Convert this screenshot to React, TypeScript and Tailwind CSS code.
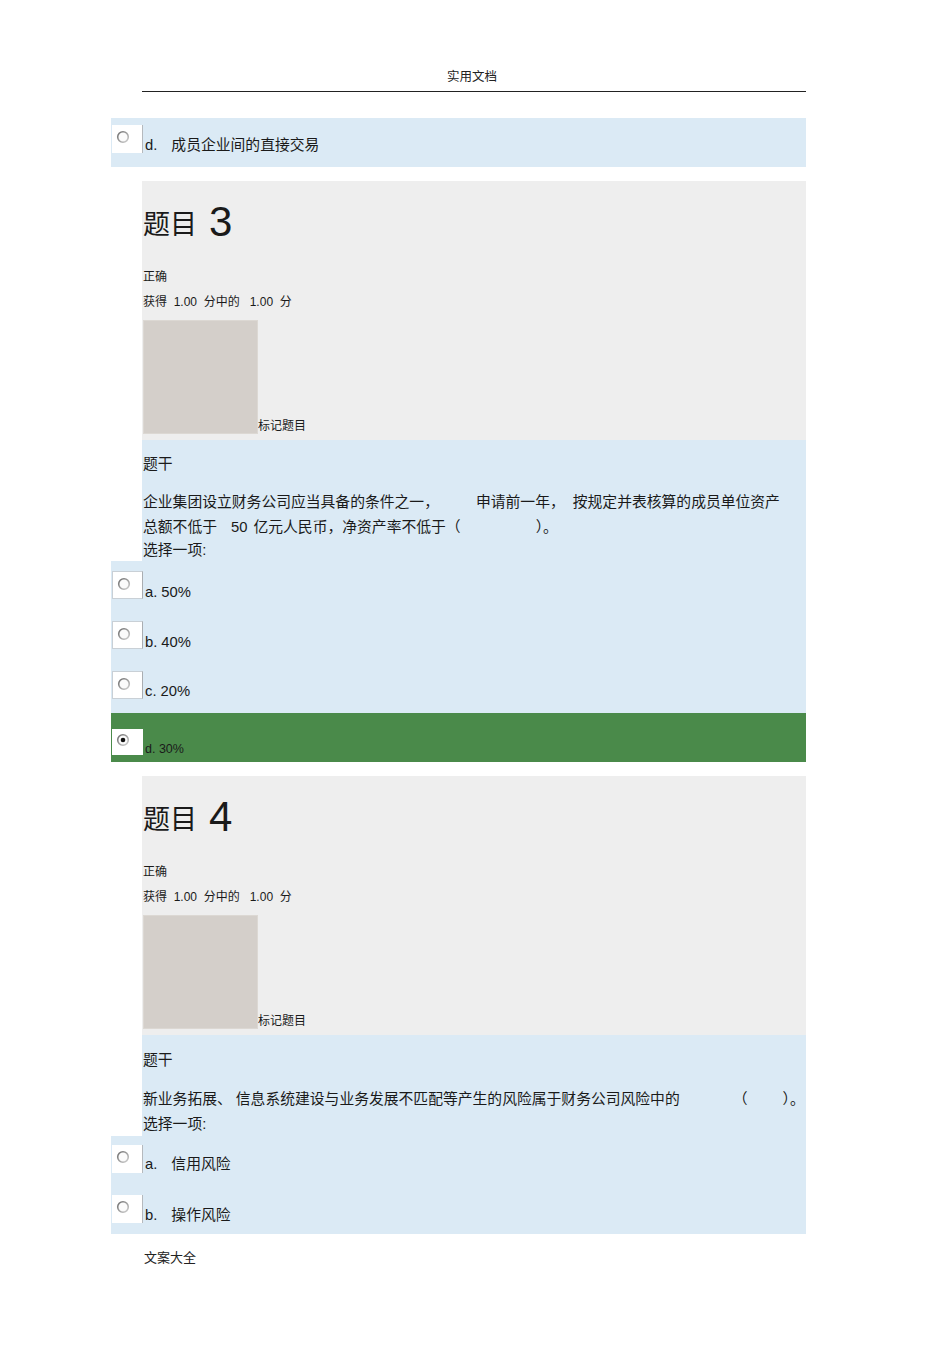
import React from 'react';

const font = { fontFamily: '"Liberation Sans", "Noto Sans CJK SC", sans-serif' };

function Radio({ checked = false }: { checked?: boolean }) {
  return (
    <svg width="14" height="14" viewBox="0 0 14 14" className="block">
      <defs>
        <linearGradient id={checked ? 'rg1' : 'rg0'} x1="0" y1="0" x2="1" y2="1">
          <stop offset="0" stopColor="#6b6b6b" />
          <stop offset="1" stopColor="#d0d0d0" />
        </linearGradient>
      </defs>
      <circle cx="7" cy="7" r="5.3" fill="#fbfbfb" stroke={`url(#${checked ? 'rg1' : 'rg0'})`} strokeWidth="1.6" />
      {checked && <circle cx="7" cy="7" r="2.3" fill="#111" />}
    </svg>
  );
}

function RadioBox({ bordered = false }: { bordered?: boolean }) {
  return (
    <div
      className={`w-[31px] h-[28px] shrink-0 bg-white pl-[4px] pt-[5px] ${bordered ? 'border border-[#c9d0d6] border-r-[#a9adb1]' : 'border-r border-[#b5b9bd]'}`}
    >
      <Radio />
    </div>
  );
}

function Option({
  label,
  text,
  rowH,
  boxTop,
  textTop,
  bordered,
  cjk,
}: {
  label: string;
  text: string;
  rowH: string;
  boxTop: string;
  textTop: string;
  bordered?: boolean;
  cjk?: boolean;
}) {
  return (
    <div className={`flex bg-[#dbeaf5] pl-[1px] ${rowH}`}>
      <div className={boxTop}>
        <RadioBox bordered={bordered} />
      </div>
      <div className={`${textTop} pl-[2px] text-[14.8px] leading-[18px] text-[#1a1a1a] whitespace-pre`}>
        {label}
        <span className={cjk ? 'ml-[14px]' : 'ml-[4px]'}>{text}</span>
      </div>
    </div>
  );
}

function QuestionHead({ num }: { num: number }) {
  return (
    <div className="ml-[31px] w-[664px] h-[259px] bg-[#eeeeee] pl-[1px] pt-[21px] text-[#1a1a1a]">
      <div className="h-[40px] flex items-end">
        <span className="text-[27px] leading-[34px]">题目</span>
        <span className="ml-[12px] text-[42px] leading-[40px]">{num}</span>
      </div>
      <div className="mt-[27px] text-[12px] leading-[16px]">正确</div>
      <div className="mt-[9px] text-[12px] leading-[16px] whitespace-pre">获得  1.00  分中的   1.00  分</div>
      <div className="mt-[10px] flex items-end">
        <div className="w-[115px] h-[114px] bg-[#d4cfca] border border-[#dcd8d3]" />
        <span className="text-[12px] leading-[15px]">标记题目</span>
      </div>
    </div>
  );
}

export default function App() {
  return (
    <div className="w-[950px] h-[1345px] bg-white" style={font}>
      <div className="pt-[69px] text-center text-[12.5px] leading-[16px] text-[#222] pr-[6px]">实用文档</div>
      <div className="ml-[142px] w-[664px] mt-[6px] border-b border-[#222]" />

      <div className="ml-[111px] w-[695px]">
        {/* trailing option of previous question */}
        <div className="mt-[26px]">
          <Option label="d." text="成员企业间的直接交易" rowH="h-[49px]" boxTop="pt-[7px]" textTop="pt-[18px]" cjk />
        </div>

        {/* question 3 */}
        <div className="mt-[14px]">
          <QuestionHead num={3} />
          <div className="ml-[31px] w-[664px] bg-[#dbeaf5] pl-[1px] pt-[14px] text-[14.8px] text-[#1a1a1a]">
            <div className="leading-[20px]">题干</div>
            <div className="mt-[16px] leading-[25px]">
              <div className="whitespace-nowrap">
                企业集团设立财务公司应当具备的条件之一，<span className="ml-[37px]">申请前一年，</span>
                <span className="ml-[8px]">按规定并表核算的成员单位资产</span>
              </div>
              <div className="whitespace-nowrap">
                总额不低于<span className="ml-[14px]">50</span>
                <span className="ml-[6px]">亿元人民币，净资产率不低于（</span>
                <span className="ml-[75px]">）。</span>
              </div>
            </div>
            <div className="leading-[21px]">选择一项:</div>
          </div>
          <div>
            <Option label="a." text="50%" rowH="h-[50px]" boxTop="pt-[10px]" textTop="pt-[22px]" bordered />
            <Option label="b." text="40%" rowH="h-[50px]" boxTop="pt-[10px]" textTop="pt-[22px]" bordered />
            <Option label="c." text="20%" rowH="h-[52px]" boxTop="pt-[10px]" textTop="pt-[21px]" bordered />
          </div>
          <div className="flex h-[49px] bg-[#4a8a4a] pl-[1px]">
            <div className="pt-[16px]">
              <div className="w-[31px] h-[26px] bg-white pl-[4px] pt-[4px]">
                <Radio checked />
              </div>
            </div>
            <div className="pt-[28px] pl-[2px] text-[12.5px] leading-[16px] text-[#1a1a1a] whitespace-pre">d. 30%</div>
          </div>
        </div>

        {/* question 4 */}
        <div className="mt-[14px]">
          <QuestionHead num={4} />
          <div className="ml-[31px] w-[664px] bg-[#dbeaf5] pl-[1px] pt-[15px] text-[14.8px] text-[#1a1a1a]">
            <div className="leading-[20px]">题干</div>
            <div className="mt-[17px] leading-[25px] whitespace-nowrap">
              新业务拓展、<span className="ml-[4px]">信息系统建设与业务发展不匹配等产生的风险属于财务公司风险中的</span>
              <span className="ml-[53px]">（</span>
              <span className="ml-[35px]">）。</span>
            </div>
            <div className="leading-[24px]">选择一项:</div>
          </div>
          <div className="bg-[#dbeaf5]">
            <div className="h-[6px]" />
            <Option label="a." text="信用风险" rowH="h-[50px]" boxTop="pt-[3px]" textTop="pt-[13px]" cjk />
            <Option label="b." text="操作风险" rowH="h-[42px]" boxTop="pt-[3px]" textTop="pt-[14px]" cjk />
          </div>
        </div>
      </div>

      <div className="ml-[144px] mt-[15px] text-[13px] leading-[18px] text-[#222]">文案大全</div>
    </div>
  );
}
